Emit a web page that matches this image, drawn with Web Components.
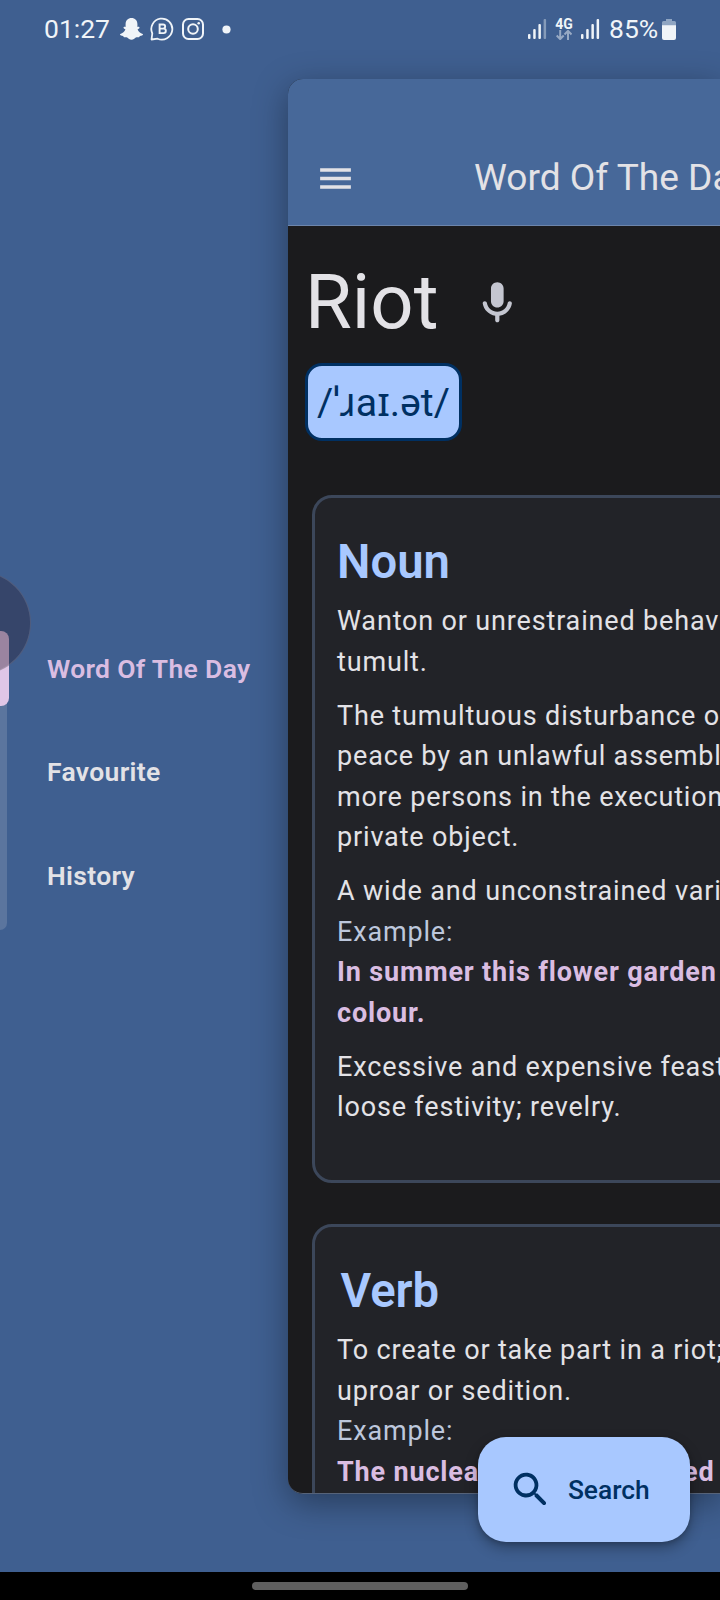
<!DOCTYPE html>
<html lang="en"><head><meta charset="utf-8"><title>Word Of The Day</title>
<style>html,body{margin:0;padding:0}body{width:720px;height:1600px;overflow:hidden;background:#3f5f90;font-family:Roboto,"Noto Sans",sans-serif}</style></head>
<body>
<dictionary-app></dictionary-app>
<script>
const define=(name,html)=>customElements.define(name,class extends HTMLElement{
  constructor(){super();this.attachShadow({mode:'open'}).innerHTML=html;}
});

define('status-bar',`<style>
:host{display:flex;align-items:center;height:58px;box-sizing:border-box;padding:0 44px 0 44px;color:#f0f4f8;font-size:26.5px;line-height:58px}
svg{display:block;flex:none}.sp{flex:1}
.net{display:flex;flex-direction:column;align-items:center;width:18px;margin:0 8px 0 8px;font-size:14px;line-height:12.500px;font-weight:700}
</style>
<span style="width:66px">01:27</span>
<svg style="margin-left:10px" width="23" height="22" viewBox="0 0 23 22"><path fill="#f0f4f8" d="M11.500 0C15 0 17.400 2.500 17.400 6v3c1-.5 2.200-.3 2.100.7-.1.700-1.200 1.200-1.900 1.600.8 2.300 2.800 4.200 5.100 4.800.5.200.3.900-.3 1.200-.8.400-1.700.6-2.600.8-.3.700-.3 1.100-.9 1.100-.9 0-2-.3-3.100.3-1.200.8-2.400 2.300-4.300 2.300s-3.100-1.500-4.300-2.300c-1.100-.6-2.200-.3-3.100-.3-.6 0-.6-.4-.9-1.100-.9-.2-1.800-.4-2.600-.8-.6-.3-.8-1-.3-1.200 2.300-.6 4.300-2.500 5.100-4.800-.7-.4-1.800-.9-1.900-1.600-.1-1 1.100-1.200 2.100-.7V6C5.600 2.500 8 0 11.500 0z"/></svg>
<svg style="margin-left:7px" width="25" height="24" viewBox="0 0 25 24" fill="none" stroke="#f0f4f8"><path stroke-width="1.800" stroke-linejoin="round" d="M1.500 22.500 2.300 16.500A10.500 10.500 0 1 1 7.600 21.700z"/><path stroke-width="1.900" d="M9.600 7.500h3.500a2 2 0 0 1 0 4.100H9.600zM9.600 11.600h4a2.200 2.200 0 0 1 0 4.500H9.600z"/></svg>
<svg style="margin-left:7px" width="22" height="22" viewBox="0 0 22 22" fill="none" stroke="#f0f4f8" stroke-width="2"><rect x="1" y="1" width="20" height="20" rx="5.500"/><circle cx="11" cy="11" r="4.800"/><circle cx="16.700" cy="5.200" r="1.300" fill="#f0f4f8" stroke="none"/></svg>
<svg style="margin-left:17.500px" width="9" height="9"><circle cx="4.500" cy="4.500" r="4.100" fill="#f0f4f8"/></svg>
<span class="sp"></span>
<svg width="19" height="20" viewBox="0 0 19 20"><g fill="#f0f4f8"><rect x="0" y="15" width="2.500" height="5" rx="1"/><rect x="5.200" y="10" width="2.500" height="10" rx="1"/><rect x="10.400" y="5" width="2.500" height="15" rx="1"/><rect x="15.600" y="0" width="2.500" height="20" rx="1" opacity=".4"/></g></svg>
<div class="net"><span>4G</span><svg width="16" height="10" viewBox="0 0 16 10" fill="none" stroke="#f0f4f8" stroke-width="2" opacity=".5"><path d="M4.200 0v9M.7 5.500l3.500 3.600 3.500-3.600M12 10V1M8.500 4.500 12 .9l3.500 3.600"/></svg></div>
<svg width="19" height="20" viewBox="0 0 19 20"><g fill="#f0f4f8"><rect x="0" y="15" width="2.500" height="5" rx="1"/><rect x="5.200" y="10" width="2.500" height="10" rx="1"/><rect x="10.400" y="5" width="2.500" height="15" rx="1"/><rect x="15.600" y="0" width="2.500" height="20" rx="1"/></g></svg>
<span style="margin-left:9px;width:50px">85%</span>
<svg style="margin-left:3px" width="14" height="21" viewBox="0 0 14 21"><path fill="#8fa5c2" d="M4 0h6v2h2.500Q14 2 14 3.500V7H0V3.500Q0 2 1.500 2H4z"/><path fill="#f0f4f8" d="M0 6.300h14V19q0 2-2 2H2q-2 0-2-2z"/></svg>`);

define('menu-item',`<style>
:host{display:block;height:103.500px;line-height:103.500px;font-size:26.500px;font-weight:600;letter-spacing:.32px;color:#e3e2e6;white-space:nowrap}
:host([active]){color:#dabde2}</style><slot></slot>`);

define('side-menu',`<style>
:host{display:block;width:288px;height:100%;position:relative;overflow:hidden}
nav{padding:558.500px 0 0 47px}
.track,.thumb,.bubble{position:absolute}
.track{left:-12px;top:573px;width:19.300px;height:299px;border-radius:7px;background:#5b759e}
.thumb{left:-12px;top:573px;width:21.300px;height:75px;border-radius:8px;background:#e0c6e7}
.bubble{left:-73.500px;top:513px;width:104px;height:104px;border-radius:50%;background:rgba(39,26,44,.38);border:1.500px solid rgba(255,255,255,.13);box-sizing:border-box}
</style><nav><menu-item active>Word Of The Day</menu-item><menu-item>Favourite</menu-item><menu-item>History</menu-item></nav>
<div class="track"></div><div class="thumb"></div><div class="bubble"></div>`);

define('top-bar',`<style>
:host{display:flex;box-sizing:border-box;height:147px;background:#476899;border-bottom:1px solid #6d85ab;padding:79px 0 0 27px;align-items:flex-start;color:#e3e2e6}
svg{width:41px;height:41px;flex:none}
span{margin-left:118px;font-size:37.100px;line-height:41px;white-space:nowrap;margin-top:-1px}
</style><svg viewBox="0 0 24 24" fill="currentColor"><path d="M3 18h18v-2H3v2zm0-5h18v-2H3v2zm0-7v2h18V6H3z"/></svg><span><slot></slot></span>`);

define('word-heading',`<style>
:host{display:block;padding:32px 0 0 17px}
.row{display:flex;height:88px;align-items:center;color:#e3e2e6}
.w{font-size:76px;line-height:88px;width:167px}svg{width:50.600px;height:50.600px;color:#c4c6d0;margin-top:2px}
.ipa{display:inline-flex;margin-top:17px;box-sizing:border-box;width:157px;height:78px;border:3.400px solid #003062;border-radius:17px;background:#a8c8ff;color:#003062;font-size:39.300px;padding-bottom:3px;align-items:center;justify-content:center;white-space:nowrap}
</style><div class="row"><span class="w"><slot></slot></span><svg viewBox="0 0 24 24" fill="currentColor"><path d="M12 14c1.660 0 3-1.340 3-3V5c0-1.660-1.340-3-3-3S9 3.340 9 5v6c0 1.660 1.340 3 3 3zm5.910-3c-.49 0-.9.36-.98.85C16.520 14.200 14.470 16 12 16s-4.520-1.800-4.930-4.150c-.08-.49-.49-.85-.98-.85-.61 0-1.090.54-1 1.140.49 3 2.890 5.350 5.910 5.780V20c0 .55.45 1 1 1s1-.45 1-1v-2.080c3.020-.43 5.420-2.780 5.910-5.780.1-.6-.39-1.140-1-1.140z"/></svg></div><div class="ipa"><slot name="ipa"></slot></div>`);

define('definition-card',`<style>
:host{display:block;box-sizing:border-box;margin-left:24px;width:470px;border:3px solid #3c475a;border-radius:20px;background:#222328;padding:34px 0 52.500px 22px;color:#e3e2e6}
.h{font-size:47.250px;line-height:60.750px;font-weight:600;color:#a8c8ff;margin:0 0 8.600px;padding-left:var(--indent,0px)}
.b{display:flex;flex-direction:column;gap:13.500px}
</style><div class="h"><slot name="title"></slot></div><div class="b"><slot></slot></div>`);

define('word-sense',`<style>:host{display:block;font-size:27px;line-height:40.500px;letter-spacing:.84px;white-space:pre}
::slotted(i){font-style:normal;color:#bdc7dc}::slotted(b){font-weight:700;color:#dabde2}</style><slot></slot>`);

define('search-fab',`<style>
:host{display:flex;align-items:center;box-sizing:border-box;width:212px;height:105px;border-radius:28px;background:#a8c8ff;color:#003062;padding-left:29.500px;font-size:26.400px;font-weight:500;box-shadow:0 6px 14px rgba(0,0,0,.3),0 2px 4px rgba(0,0,0,.15)}
svg{width:45.600px;height:45.600px;flex:none}span{margin-left:14.800px}
</style><svg viewBox="0 0 24 24" fill="currentColor"><path d="M15.500 14h-.79l-.28-.27c1.200-1.400 1.820-3.310 1.480-5.340-.47-2.780-2.790-5-5.590-5.340-4.230-.52-7.790 3.040-7.270 7.270.34 2.800 2.560 5.120 5.340 5.590 2.030.34 3.940-.28 5.340-1.480l.27.28v.79l4.250 4.250c.41.41 1.080.41 1.490 0 .41-.41.41-1.080 0-1.490L15.500 14zm-6 0C7.010 14 5 11.990 5 9.500S7.010 5 9.500 5 14 7.010 14 9.500 11.990 14 9.500 14z"/></svg><span><slot></slot></span>`);

define('word-panel',`<style>
:host{display:block;height:1415px;margin-top:21px;min-width:0;background:#1b1b1d;border-radius:15px 0 0 15px;box-shadow:0 9px 34px rgba(0,0,0,.36)}
.clip{height:100%;overflow:hidden;border-radius:inherit;box-sizing:border-box;border-bottom:1px solid #566379}
.cards{display:flex;flex-direction:column;gap:40.600px;padding-top:54px}
</style><div class="clip"><top-bar>Word Of The Da</top-bar>
<word-heading>Riot<span slot="ipa">/ˈɹaɪ.ət/</span></word-heading>
<div class="cards">
<definition-card><span slot="title">Noun</span>
<word-sense>Wanton or unrestrained behav<br>tumult.</word-sense>
<word-sense>The tumultuous disturbance o<br>peace by an unlawful assembl<br>more persons in the execution<br>private object.</word-sense>
<word-sense>A wide and unconstrained vari<br><i>Example:</i><br><b>In summer this flower garden</b><br><b>colour.</b></word-sense>
<word-sense>Excessive and expensive feast<br>loose festivity; revelry.</word-sense></definition-card>
<definition-card style="--indent:3.500px"><span slot="title">Verb</span>
<word-sense>To create or take part in a riot;<br>uproar or sedition.<br><i>Example:</i><br><b>The nuclear protesters rioted</b></word-sense></definition-card>
</div></div>`);

define('gesture-bar',`<style>:host{display:flex;justify-content:center;align-items:center;height:28px;background:#000}
i{width:216px;height:8px;border-radius:4px;background:#5f5f5f}</style><i></i>`);

define('dictionary-app',`<style>
:host{display:flex;flex-direction:column;width:720px;height:1600px;position:relative;overflow:hidden;background:#3f5f90}
status-bar{position:relative;z-index:1}
main{display:grid;grid-template-columns:288px 432px;height:1514px}
side-menu{z-index:0}
search-fab{position:absolute;left:478px;top:1437px}
gesture-bar{position:relative;z-index:1}
</style><status-bar></status-bar><main><side-menu></side-menu><word-panel></word-panel></main><gesture-bar></gesture-bar><search-fab>Search</search-fab>`);
</script></body></html>
